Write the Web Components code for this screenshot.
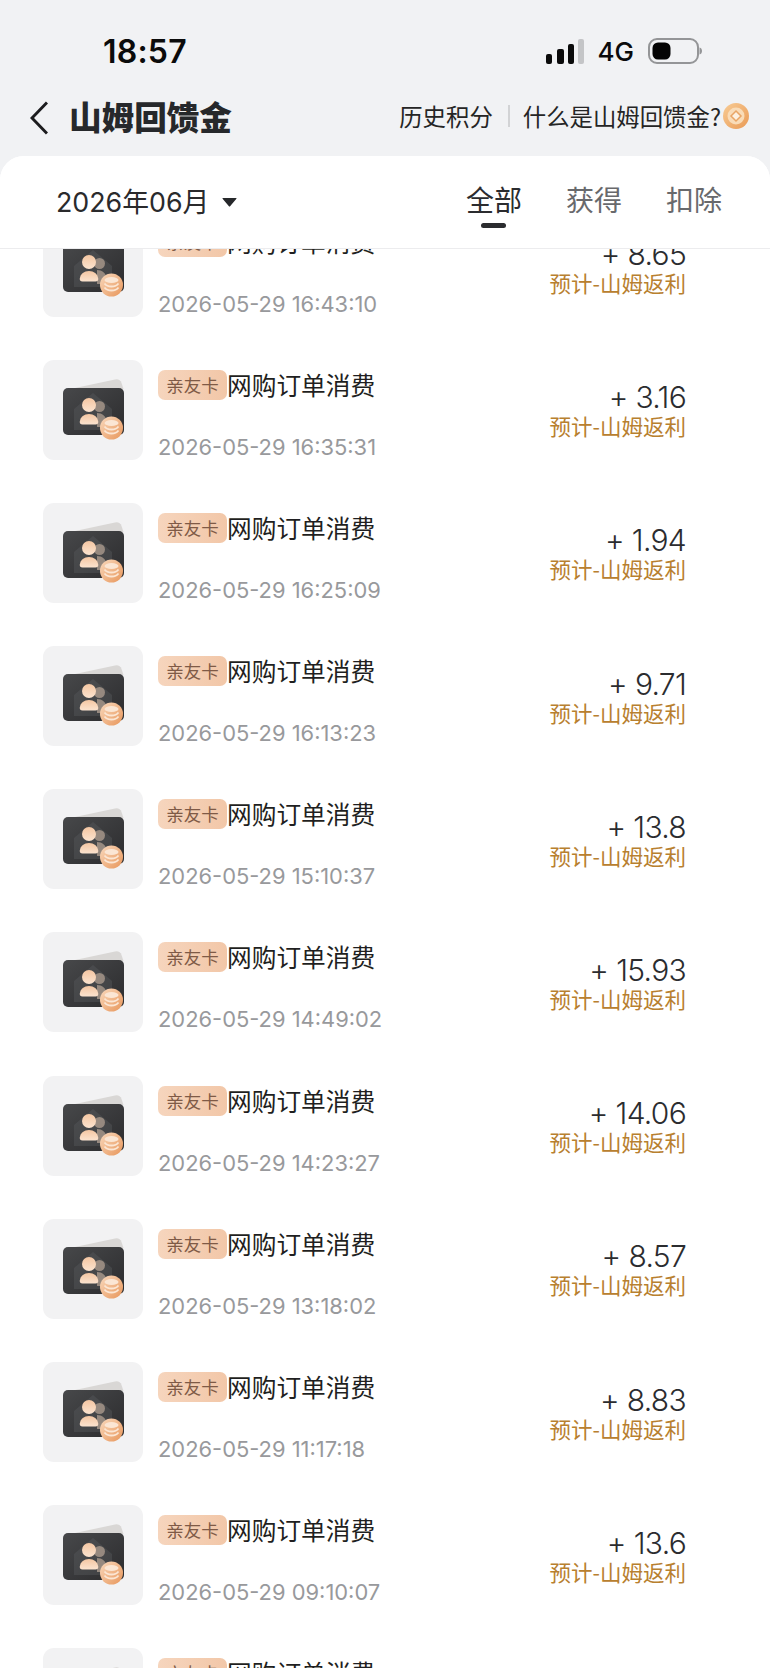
<!DOCTYPE html>
<html lang="zh-CN">
<head>
<meta charset="utf-8">
<title>山姆回馈金</title>
<style>
    html, body { margin: 0; height: 100%; background: #f1f2f4; overflow: hidden; }
    body { font-family: "Inter", "Noto Sans CJK SC", sans-serif; }
</style>
</head>
<body>
<rebate-page>
    <status-bar time="18:57"></status-bar>
    <nav-bar heading="山姆回馈金"></nav-bar>
    <rebate-panel>
        <filter-bar slot="head" month="2026年06月"></filter-bar>
        <order-row amount="8.65" date="2026-05-29 16:43:10">网购订单消费</order-row>
        <order-row amount="3.16" date="2026-05-29 16:35:31">网购订单消费</order-row>
        <order-row amount="1.94" date="2026-05-29 16:25:09">网购订单消费</order-row>
        <order-row amount="9.71" date="2026-05-29 16:13:23">网购订单消费</order-row>
        <order-row amount="13.8" date="2026-05-29 15:10:37">网购订单消费</order-row>
        <order-row amount="15.93" date="2026-05-29 14:49:02">网购订单消费</order-row>
        <order-row amount="14.06" date="2026-05-29 14:23:27">网购订单消费</order-row>
        <order-row amount="8.57" date="2026-05-29 13:18:02">网购订单消费</order-row>
        <order-row amount="8.83" date="2026-05-29 11:17:18">网购订单消费</order-row>
        <order-row amount="13.6" date="2026-05-29 09:10:07">网购订单消费</order-row>
        <order-row amount="6.20" date="2026-05-29 08:52:44">网购订单消费</order-row>
    </rebate-panel>
</rebate-page>

<script>
class RebatePage extends HTMLElement {
    constructor() {
        super();
        this.attachShadow({ mode: 'open' });
        this.shadowRoot.innerHTML = `
            <style>
                :host {
                    display: flex;
                    flex-direction: column;
                    height: 1668px;
                    background: #f1f2f4;
                    color: #222;
                    overflow: hidden;
                }
            </style>
            <slot></slot>
        `;
    }
}

class StatusBar extends HTMLElement {
    constructor() {
        super();
        this.attachShadow({ mode: 'open' });
        this.shadowRoot.innerHTML = `
            <style>
                :host {
                    display: flex;
                    align-items: center;
                    justify-content: space-between;
                    box-sizing: border-box;
                    height: 86px;
                    padding: 18px 68px 0 103px;
                    flex: none;
                    color: #0b0b0b;
                }
                .time { font: 600 32px/36px "Inter", "Roboto", sans-serif; letter-spacing: .2px; }
                .right { display: flex; align-items: center; margin-top: -2px; }
                .net { font: 500 26px/30px "Inter", "Roboto", sans-serif; margin: 2px 14px 0 14px; }
                svg { display: block; }
            </style>
            <span class="time">${this.getAttribute('time')}</span>
            <span class="right">
                <svg width="38" height="25" viewBox="0 0 38 25">
                    <rect x="0" y="15" width="6" height="10" rx="2" fill="#0b0b0b"/>
                    <rect x="11" y="10" width="7" height="15" rx="2" fill="#0b0b0b"/>
                    <rect x="22" y="5" width="6" height="20" rx="2" fill="#0b0b0b"/>
                    <rect x="32" y="0" width="6" height="25" rx="2" fill="#c4c5c7"/>
                </svg>
                <span class="net">4G</span>
                <svg width="54" height="26" viewBox="0 0 54 26">
                    <rect x="1" y="1" width="49" height="24" rx="8" fill="none" stroke="#949597" stroke-width="2"/>
                    <rect x="4.500" y="4.500" width="18" height="17" rx="5.500" fill="#050505"/>
                    <path d="M51.500 9.500c1.800.4 2.500 2 2.500 3.500s-.7 3.100-2.500 3.500z" fill="#949597"/>
                </svg>
            </span>
        `;
    }
}

class NavBar extends HTMLElement {
    constructor() {
        super();
        this.attachShadow({ mode: 'open' });
        this.shadowRoot.innerHTML = `
            <style>
                :host {
                    display: flex;
                    align-items: center;
                    box-sizing: border-box;
                    height: 70px;
                    padding: 0 21px 11px 30px;
                    flex: none;
                    font-family: "Noto Sans CJK SC", sans-serif;
                }
                .back { display: block; flex: none; margin: 5px 21px 0 0; }
                h1 {
                    margin: 0;
                    font-size: 32.600px;
                    line-height: 40px;
                    font-weight: 900;
                    color: #26282b;
                    flex: 1;
                }
                .links { display: flex; align-items: center; font-size: 23.400px; line-height: 30px; color: #252525; }
                .sep { width: 2px; height: 22px; background: #d2d3d5; margin: 0 13px 0 15px; }
                .coin { display: block; margin-left: 2px; }
            </style>
            <svg class="back" width="18" height="34" viewBox="0 0 18 34">
                <path d="M17 1.500 2 17l15 15.500" fill="none" stroke="#1c1c1e" stroke-width="3"/>
            </svg>
            <h1>${this.getAttribute('heading')}</h1>
            <div class="links">
                <span>历史积分</span>
                <span class="sep"></span>
                <span>什么是山姆回馈金?</span>
                <svg class="coin" width="26" height="26" viewBox="0 0 26 26">
                    <defs>
                        <linearGradient id="cg" x1="0" y1="0" x2="1" y2="1">
                            <stop offset="0" stop-color="#f8cc95"/>
                            <stop offset="1" stop-color="#e99a55"/>
                        </linearGradient>
                    </defs>
                    <circle cx="13" cy="13" r="13" fill="url(#cg)"/>
                    <circle cx="13" cy="13" r="8.500" fill="#f9dcb8"/>
                    <path d="M13 8l5 5-5 5-5-5z" fill="#fdf0df" stroke="#e9a565" stroke-width="1.500"/>
                </svg>
            </div>
        `;
    }
}

class RebatePanel extends HTMLElement {
    constructor() {
        super();
        this.attachShadow({ mode: 'open' });
        this.shadowRoot.innerHTML = `
            <style>
                :host {
                    display: flex;
                    flex-direction: column;
                    flex: 1;
                    min-height: 0;
                    background: #fff;
                    border-radius: 24px 24px 0 0;
                    overflow: hidden;
                }
                .list { flex: 1; min-height: 0; overflow: hidden; }
                /* la lista ya viene desplazada, la primera fila queda cortada */
                .scroll { margin-top: -32.500px; }
            </style>
            <slot name="head"></slot>
            <div class="list"><div class="scroll"><slot></slot></div></div>
        `;
    }
}

class FilterBar extends HTMLElement {
    constructor() {
        super();
        this.attachShadow({ mode: 'open' });
        this.shadowRoot.innerHTML = `
            <style>
                :host {
                    display: flex;
                    align-items: flex-start;
                    justify-content: space-between;
                    box-sizing: border-box;
                    height: 93px;
                    padding: 27px 48px 0 56px;
                    flex: none;
                    border-bottom: 1px solid #ececee;
                    background: #fff;
                    position: relative;
                    z-index: 1;
                    font-family: "Noto Sans CJK SC", sans-serif;
                }
                .month { display: flex; align-items: center; font-size: 26.800px; line-height: 36px; color: #2a2a2c; font-family: "Inter", "Noto Sans CJK SC", sans-serif; padding-top: 1px; }
                .month svg { margin-left: 13px; display: block; }
                .tabs { display: flex; gap: 44px; margin-top: -2px; }
                .tab { display: flex; flex-direction: column; align-items: center; font-size: 28px; line-height: 36px; color: #68696c; }
                .tab.on { color: #2b2c2f; }
                .tab.on::after { content: ""; width: 25px; height: 5px; border-radius: 3px; background: #2b2c2f; margin-top: 6px; }
            </style>
            <div class="month">
                <span>${this.getAttribute('month')}</span>
                <svg width="15" height="9" viewBox="0 0 15 9"><path d="M1 0h13q1 0 .4.800L8.300 8q-.8 1-1.600 0L.6.800Q0 0 1 0z" fill="#26282b"/></svg>
            </div>
            <div class="tabs">
                <span class="tab on">全部</span>
                <span class="tab">获得</span>
                <span class="tab">扣除</span>
            </div>
        `;
    }
}

class OrderRow extends HTMLElement {
    constructor() {
        super();
        this.attachShadow({ mode: 'open' });
        this.shadowRoot.innerHTML = `
            <style>
                :host {
                    display: flex;
                    box-sizing: border-box;
                    height: 143.200px;
                    padding: 0 84px 0 43px;
                    font-family: "Noto Sans CJK SC", sans-serif;
                }
                .thumb {
                    width: 100px;
                    height: 100px;
                    flex: none;
                    border-radius: 11px;
                    background: #f2f2f3;
                    margin-right: 15px;
                }
                .thumb svg { display: block; }
                .info { flex: 1; padding-top: 10px; }
                .top { display: flex; align-items: center; height: 30px; }
                .tag {
                    width: 69px;
                    height: 30px;
                    box-sizing: border-box;
                    border-radius: 7px;
                    background: linear-gradient(90deg, #f6d5bd, #f2c7a8);
                    color: #7f5a46;
                    font-size: 17.500px;
                    line-height: 29px;
                    text-align: center;
                }
                .name { font-size: 24.700px; line-height: 30px; color: #1f1f21; margin-top: -2px; }
                .date {
                    margin-top: 32px;
                    font: 400 21.900px/30px "Inter", "Roboto", sans-serif;
                    color: #98999c;
                    white-space: nowrap;
                }
                .money { text-align: right; padding-top: 22.500px; }
                .amount { font: 350 30px/31px "Inter", "Roboto", sans-serif; color: #2b2c2f; letter-spacing: -.7px; white-space: pre; }
                .amount span { margin-right: 8px; }
                .kind { font-size: 21.500px; line-height: 25px; color: #b8802f; white-space: nowrap; }
            </style>
            <div class="thumb">
                <svg width="100" height="100" viewBox="0 0 100 100">
                    <defs>
                        <linearGradient id="card" x1="0" y1="0" x2="1" y2="1">
                            <stop offset="0" stop-color="#47484a"/>
                            <stop offset="1" stop-color="#2c2c2e"/>
                        </linearGradient>
                        <linearGradient id="skin" x1="0" y1="0" x2="0" y2="1">
                            <stop offset="0" stop-color="#f4c6a2"/>
                            <stop offset="1" stop-color="#fbe3cf"/>
                        </linearGradient>
                        <linearGradient id="stack" x1="0" y1="0" x2="1" y2="1">
                            <stop offset="0" stop-color="#f9d9bd"/>
                            <stop offset="1" stop-color="#e8965a"/>
                        </linearGradient>
                    </defs>
                    <path d="M32 28 72 19.500q5-.8 6.500 3.500l2 6z" fill="#d9d7d5"/>
                    <rect x="20" y="28" width="61" height="47" rx="5" fill="url(#card)"/>
                    <path d="M50 33 69 49v21H31V49z" fill="#5b5c5e" opacity=".4"/>
                    <circle cx="56.500" cy="46.500" r="5.500" fill="#96897f"/>
                    <path d="M54 53c5 0 9 3 10 9l-3 5h-7z" fill="#96897f"/>
                    <circle cx="46" cy="45" r="7" fill="url(#skin)"/>
                    <path d="M39.500 64.500c-2 0-3-1-2.700-3 .8-4.700 4.200-7.500 9.200-7.500s8.400 2.800 9.200 7.500c.3 2-.7 3-2.700 3z" fill="url(#skin)"/>
                    <circle cx="68.500" cy="68" r="11.500" fill="url(#stack)"/>
                    <ellipse cx="68.500" cy="63" rx="7" ry="3" fill="#fbe6d4"/>
                    <path d="M61.500 66.500c1.500 2 4 3 7 3s5.500-1 7-3M61.500 70.500c1.500 2 4 3 7 3s5.500-1 7-3" fill="none" stroke="#fbe6d4" stroke-width="1.800"/>
                </svg>
            </div>
            <div class="info">
                <div class="top"><span class="tag">亲友卡</span><span class="name"><slot></slot></span></div>
                <div class="date">${this.getAttribute('date')}</div>
            </div>
            <div class="money">
                <div class="amount"><span>+</span>${this.getAttribute('amount')}</div>
                <div class="kind">预计-山姆返利</div>
            </div>
        `;
    }
}

customElements.define('rebate-page', RebatePage);
customElements.define('status-bar', StatusBar);
customElements.define('nav-bar', NavBar);
customElements.define('rebate-panel', RebatePanel);
customElements.define('filter-bar', FilterBar);
customElements.define('order-row', OrderRow);
</script>
</body>
</html>
